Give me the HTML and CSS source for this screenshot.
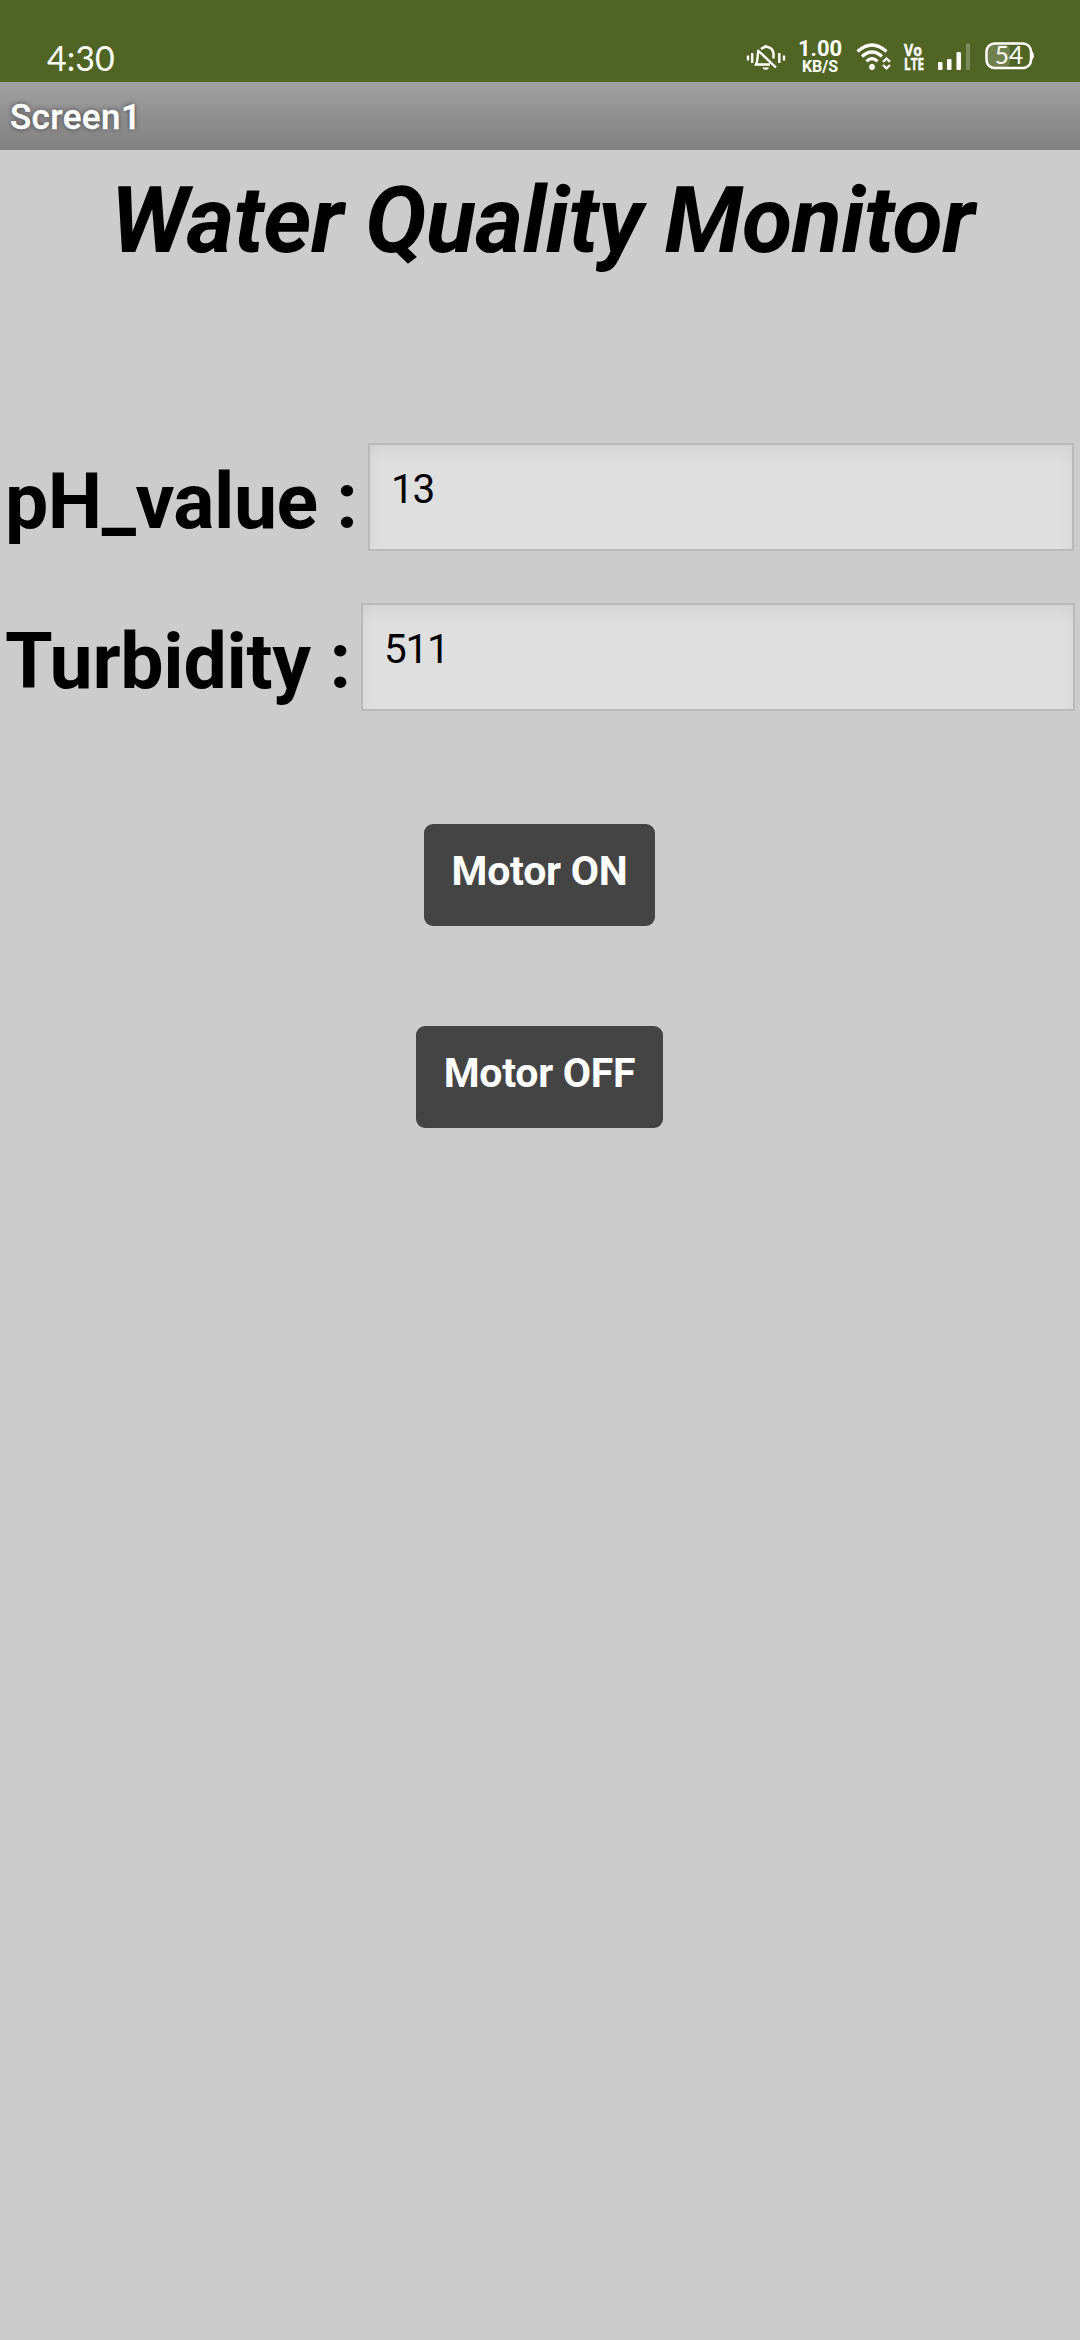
FILE: index.html
```html
<!DOCTYPE html>
<html lang="en">
<head>
<meta charset="utf-8">
<title>Screen1</title>
<link rel="stylesheet" href="styles.css">
</head>
<body>
<header class="status">
  <span class="clock">4:30</span>
  <div class="status-icons">
    <svg class="bell" width="40" height="28" viewBox="0 0 40 28" fill="none" stroke="#fff">
      <path d="M2 11.500v5M6.200 9v10M33.300 9v10M38 11.500v5" stroke-width="2.400"/>
      <path d="M12.500 7.500C11 11 12.500 15 10 20.500H24M15 5C21 .5 27.500 4 27.500 10.500V14.500M11.500 6L30 23.500" stroke-width="2.400"/>
      <path d="M17.500 3Q19.800-1.500 22 3z" fill="#fff" stroke="none"/>
      <path d="M16.500 23.500h6.500a3.300 2.800 0 0 1-6.500 0z" fill="#fff" stroke="none"/>
    </svg>
    <div class="speed"><span class="speed-num">1.00</span><span class="speed-unit">KB/S</span></div>
    <svg class="wifi" width="36" height="28" viewBox="0 0 36 28" fill="none" stroke="#fff" stroke-width="3.200">
      <path d="M1.500 8.500Q16-4.500 30.500 8.500M6 13.500Q16 4.500 26 13.500M10.500 18.300Q16 13 21.500 18.300"/>
      <circle cx="16" cy="24" r="2.900" fill="#fff" stroke="none"/>
      <path d="M27 18.800l3.500-3.300 3.500 3.300M27 22l3.500 3.300 3.500-3.300" stroke-width="2.300"/>
    </svg>
    <svg class="volte" width="20" height="28" viewBox="0 0 20 28">
      <text x="0" y="12.800" textLength="18" lengthAdjust="spacingAndGlyphs">Vo</text>
      <text x="0" y="26.500" textLength="20" lengthAdjust="spacingAndGlyphs">LTE</text>
    </svg>
    <svg class="signal" width="34" height="28" viewBox="0 0 34 28" fill="#fff">
      <rect x="1" y="19" width="4.500" height="8" rx="1"/>
      <rect x="10" y="16" width="4.500" height="11" rx="1"/>
      <rect x="19.500" y="9" width="4.500" height="18" rx="1"/>
      <rect x="29" y="0.500" width="4" height="26.500" rx="1" opacity=".25"/>
    </svg>
    <svg class="battery" width="50" height="28" viewBox="0 0 50 28">
      <rect x="3" y="3" width="22" height="22" rx="5" fill="#fff" opacity=".18"/>
      <rect x="1.500" y="1.500" width="44.500" height="24.500" rx="8" fill="none" stroke="#fff" stroke-width="2.500"/>
      <path d="M47 9q4 4.500 0 9z" fill="#fff"/>
      <text class="battery-level" x="24" y="22.300" text-anchor="middle">54</text>
    </svg>
  </div>
</header>
<div class="titlebar">Screen1</div>
<main class="content">
  <h1 class="heading">Water Quality Monitor</h1>
  <div class="row row-ph"><span class="label">pH_value :</span><div class="field">13</div></div>
  <div class="row row-turbidity"><span class="label">Turbidity :</span><div class="field">511</div></div>
  <button class="button button-on">Motor ON</button>
  <button class="button button-off">Motor OFF</button>
</main>
</body>
</html>
```
FILE: styles.css
```css
* { box-sizing: border-box; }
body {
  margin: 0;
  width: 1080px;
  min-height: 2340px;
  background: #ccc;
  font-family: Roboto, "Liberation Sans", sans-serif;
  color: #000;
}
svg { overflow: visible; }
.status {
  height: 82px;
  display: flex;
  justify-content: space-between;
  padding: 0 45px 0 47px;
  background: #506424;
  color: #fff;
}
.clock {
  margin-top: 38px;
  font: 34px/40px Lato, sans-serif;
  white-space: nowrap;
}
.status-icons {
  display: flex;
  align-items: flex-start;
  padding-top: 40px;
}
.bell { margin: 4px 12px 0 0; }
.speed {
  width: 44px;
  display: flex;
  flex-direction: column;
  align-items: center;
  padding-top: 1px;
  font-weight: 700;
  white-space: nowrap;
}
.speed-num { font-size: 22px; line-height: 16px; }
.speed-unit { font-size: 16px; line-height: 17px; margin-top: 1px; }
.wifi { margin: 3px 0 0 14px; }
.volte {
  margin: 3px 0 0 12px;
  font: 700 16px "Open Sans", sans-serif;
  fill: #fff;
  stroke: #fff;
  stroke-width: .4px;
}
.signal { margin: 3px 0 0 13px; }
.battery { margin: 2px 0 0 14px; }
.battery-level { font: 24.500px Lato, sans-serif; fill: #fff; }
.titlebar {
  height: 68px;
  padding-left: 10px;
  background: linear-gradient(#a0a0a0, #808080);
  color: #fff;
  font-size: 35px;
  font-weight: 500;
  line-height: 71px;
  letter-spacing: .4px;
  -webkit-text-stroke: .4px #fff;
  text-shadow: 0 0 5px rgba(0, 0, 0, .6);
}
.content {
  display: flex;
  flex-direction: column;
  align-items: center;
  padding-top: 17px;
}
.heading {
  margin: 0 0 0 5px;
  font-size: 92px;
  font-style: italic;
  font-weight: 700;
  line-height: 108px;
  letter-spacing: -.6px;
  white-space: nowrap;
}
.row {
  display: flex;
  align-self: stretch;
  height: 108px;
  padding-left: 5px;
}
.row-ph { margin-top: 168px; padding-right: 6px; }
.row-turbidity { margin-top: 52px; padding-right: 5px; }
.label {
  font-size: 77px;
  font-weight: 700;
  line-height: 118px;
  white-space: nowrap;
}
.row-ph .label { width: 363px; letter-spacing: -.5px; }
.row-turbidity .label { width: 356px; letter-spacing: -.3px; }
.field {
  flex: 1;
  padding: 20px 0 0 21px;
  border: 2px solid #bababa;
  background:
    linear-gradient(rgba(0, 0, 0, .04), transparent 20px),
    linear-gradient(90deg, rgba(0, 0, 0, .025), transparent 12px),
    linear-gradient(270deg, rgba(0, 0, 0, .025), transparent 12px),
    #dfdfdf;
  font-size: 40.5px;
  line-height: 48px;
  letter-spacing: -1.2px;
}
.button {
  border: 0;
  border-radius: 9px;
  height: 102px;
  padding: 0 0 7px;
  background: #444;
  color: #fff;
  font: 700 41px/95px Roboto, "Liberation Sans", sans-serif;
  letter-spacing: -.25px;
}
.button-on { width: 231px; margin: 113px 1px 0 0; }
.button-off { width: 247px; margin: 100px 1px 0 0; }
```
